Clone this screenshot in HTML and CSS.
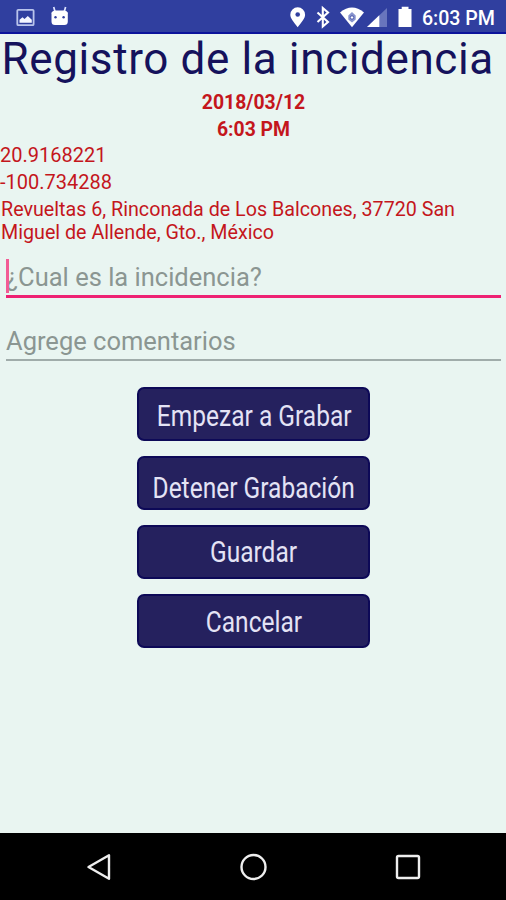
FILE: index.html
```html
<!DOCTYPE html>
<html lang="es">
<head>
<meta charset="utf-8">
<title>Registro de la incidencia</title>
<link rel="stylesheet" href="styles.css">
</head>
<body>
<header class="status">
  <svg class="status-icons" width="506" height="34" viewBox="0 0 506 34" aria-hidden="true">
    <rect x="17.300" y="9.800" width="16.300" height="15.400" rx="1" fill="none" stroke="#b9c4ec" stroke-width="1.800"/>
    <path d="M19.500 22.800v-3l3-2.500 2 1.600 3.300-2.800 4 3.700v3z" fill="#f4f6ff"/>
    <path d="M51.500 12.500h16.300v9q0 3.500-3.500 3.500h-9.300q-3.500 0-3.500-3.500z" fill="#fff"/>
    <path d="M53.700 7l1.300 4.500M65.600 7l-1.300 4.500" stroke="#dfe5ff" stroke-width="1.700"/>
    <path d="M51.500 13.500q.5-3 4-3h8.300q3.500 0 4 3z" fill="#fff"/>
    <circle cx="55.500" cy="17.300" r="1.200" fill="#303f9f"/><circle cx="63.600" cy="17.300" r="1.200" fill="#303f9f"/>
    <path d="M297.700 27.300C293.500 21.500 290.300 18.300 290.300 14.700a7.400 7.400 0 0 1 14.800 0C305.100 18.300 301.900 21.500 297.700 27.300z" fill="#fff"/>
    <circle cx="297.700" cy="14.500" r="2.300" fill="#303f9f"/>
    <path d="M317.500 12.500l10.500 9.500-5.200 4.500V8l5.200 4.500-10.500 9.500" fill="none" stroke="#fff" stroke-width="2.100"/>
    <path d="M340 12.500Q352 2.500 364 12.500L352 27.300z" fill="#fff"/>
    <path d="M348.300 15.500l3.700-3.500 3.700 3.500v4l-3.700 3-3.700-3z" fill="#8793cd"/>
    <circle cx="352" cy="17.500" r="1.700" fill="#fff" stroke="#303f9f" stroke-width=".8"/>
    <path d="M387 8v19h-20z" fill="#6875bd"/>
    <path d="M379.300 15.300V27h-12.300z" fill="#fff"/>
    <path d="M398.500 9h3.200V6.700h6.800V9h3v18h-13z" fill="#fff"/>
  </svg>
  <span class="clock">6:03 PM</span>
</header>
<main class="screen">
  <h1 class="title">Registro de la incidencia</h1>
  <div class="stamp">2018/03/12</div>
  <div class="stamp">6:03 PM</div>
  <div class="place">20.9168221</div>
  <div class="place">-100.734288</div>
  <p class="place address">Revueltas 6, Rinconada de Los Balcones, 37720 San<br>Miguel de Allende, Gto., México</p>
  <div class="field focused">¿Cual es la incidencia?</div>
  <div class="field comments">Agrege comentarios</div>
  <div class="actions">
    <button class="action"><span class="label">Empezar a Grabar</span></button>
    <button class="action low"><span class="label">Detener Grabación</span></button>
    <button class="action high"><span class="label">Guardar</span></button>
    <button class="action last"><span class="label">Cancelar</span></button>
  </div>
</main>
<nav class="navbar">
  <svg width="28" height="28" viewBox="0 0 28 28"><path d="M4.500 14L25 2.300v23.400z" fill="none" stroke="#eee" stroke-width="2.400" stroke-linejoin="round"/></svg>
  <svg width="28" height="28" viewBox="0 0 28 28"><circle cx="14.500" cy="14" r="12" fill="none" stroke="#eee" stroke-width="2.400"/></svg>
  <svg width="28" height="28" viewBox="0 0 28 28"><rect x="3" y="3" width="22" height="22" rx="1.500" fill="none" stroke="#eee" stroke-width="2.400"/></svg>
</nav>
</body>
</html>
```
FILE: styles.css
```css
* { box-sizing: border-box; }
body {
  margin: 0;
  width: 506px;
  height: 900px;
  display: flex;
  flex-direction: column;
  overflow: hidden;
  background: #e9f5f1;
  font-family: Roboto, "Liberation Sans", sans-serif;
}
.status {
  position: relative;
  height: 34px;
  background: #303f9f;
  border-bottom: 2px solid #0b149b;
  display: flex;
  justify-content: flex-end;
  padding-right: 11px;
}
.status-icons { position: absolute; left: 0; top: 0; }
.clock { color: #fff; font-size: 19.6px; font-weight: 500; line-height: 37px; white-space: nowrap; }
.screen { flex: 1; }
.title {
  margin: 0;
  height: 55px;
  padding-left: 1.5px;
  color: #15125c;
  font-size: 44px;
  font-weight: 400;
  letter-spacing: .62px;
  line-height: 51px;
  white-space: nowrap;
}
.stamp {
  height: 27px;
  line-height: 27px;
  padding-left: 1px;
  text-align: center;
  color: #c4161c;
  font-size: 19.4px;
  font-weight: 700;
}
.place { height: 27px; line-height: 25px; color: #c4161c; font-size: 20px; white-space: nowrap; }
.address { margin: 0; height: 48px; line-height: 23px; padding: 1px 0 0 1px; font-size: 19.7px; }
.field {
  position: relative;
  height: 53px;
  margin: 0 5px 0 6px;
  line-height: 64px;
  color: #8b9692;
  font-size: 25.5px;
  white-space: nowrap;
  border-bottom: 2px solid #a0acaa;
}
.focused { border-bottom: 3px solid #ee2173; }
.focused::before {
  content: "";
  position: absolute;
  left: 0;
  top: 14px;
  width: 3px;
  height: 34px;
  background: #f25c95;
}
.comments { height: 63px; line-height: 87px; }
.actions { display: flex; flex-direction: column; align-items: center; gap: 15px; padding-top: 26px; }
.action {
  display: flex;
  justify-content: center;
  width: 233px;
  height: 54px;
  padding: 0 0 0 2px;
  border: 2px solid #0d0957;
  border-radius: 7px;
  background: #25215e;
  color: #e4e3f5;
  font-family: inherit;
  font-size: 29px;
  line-height: 54px;
}
.action.low { line-height: 60px; }
.action.high { line-height: 51px; }
.action.last { line-height: 52px; }
.label { flex: none; white-space: nowrap; transform: scaleX(.845); }
.navbar {
  height: 67px;
  background: #000;
  display: flex;
  justify-content: space-between;
  align-items: center;
  padding: 0 84px;
}
```
